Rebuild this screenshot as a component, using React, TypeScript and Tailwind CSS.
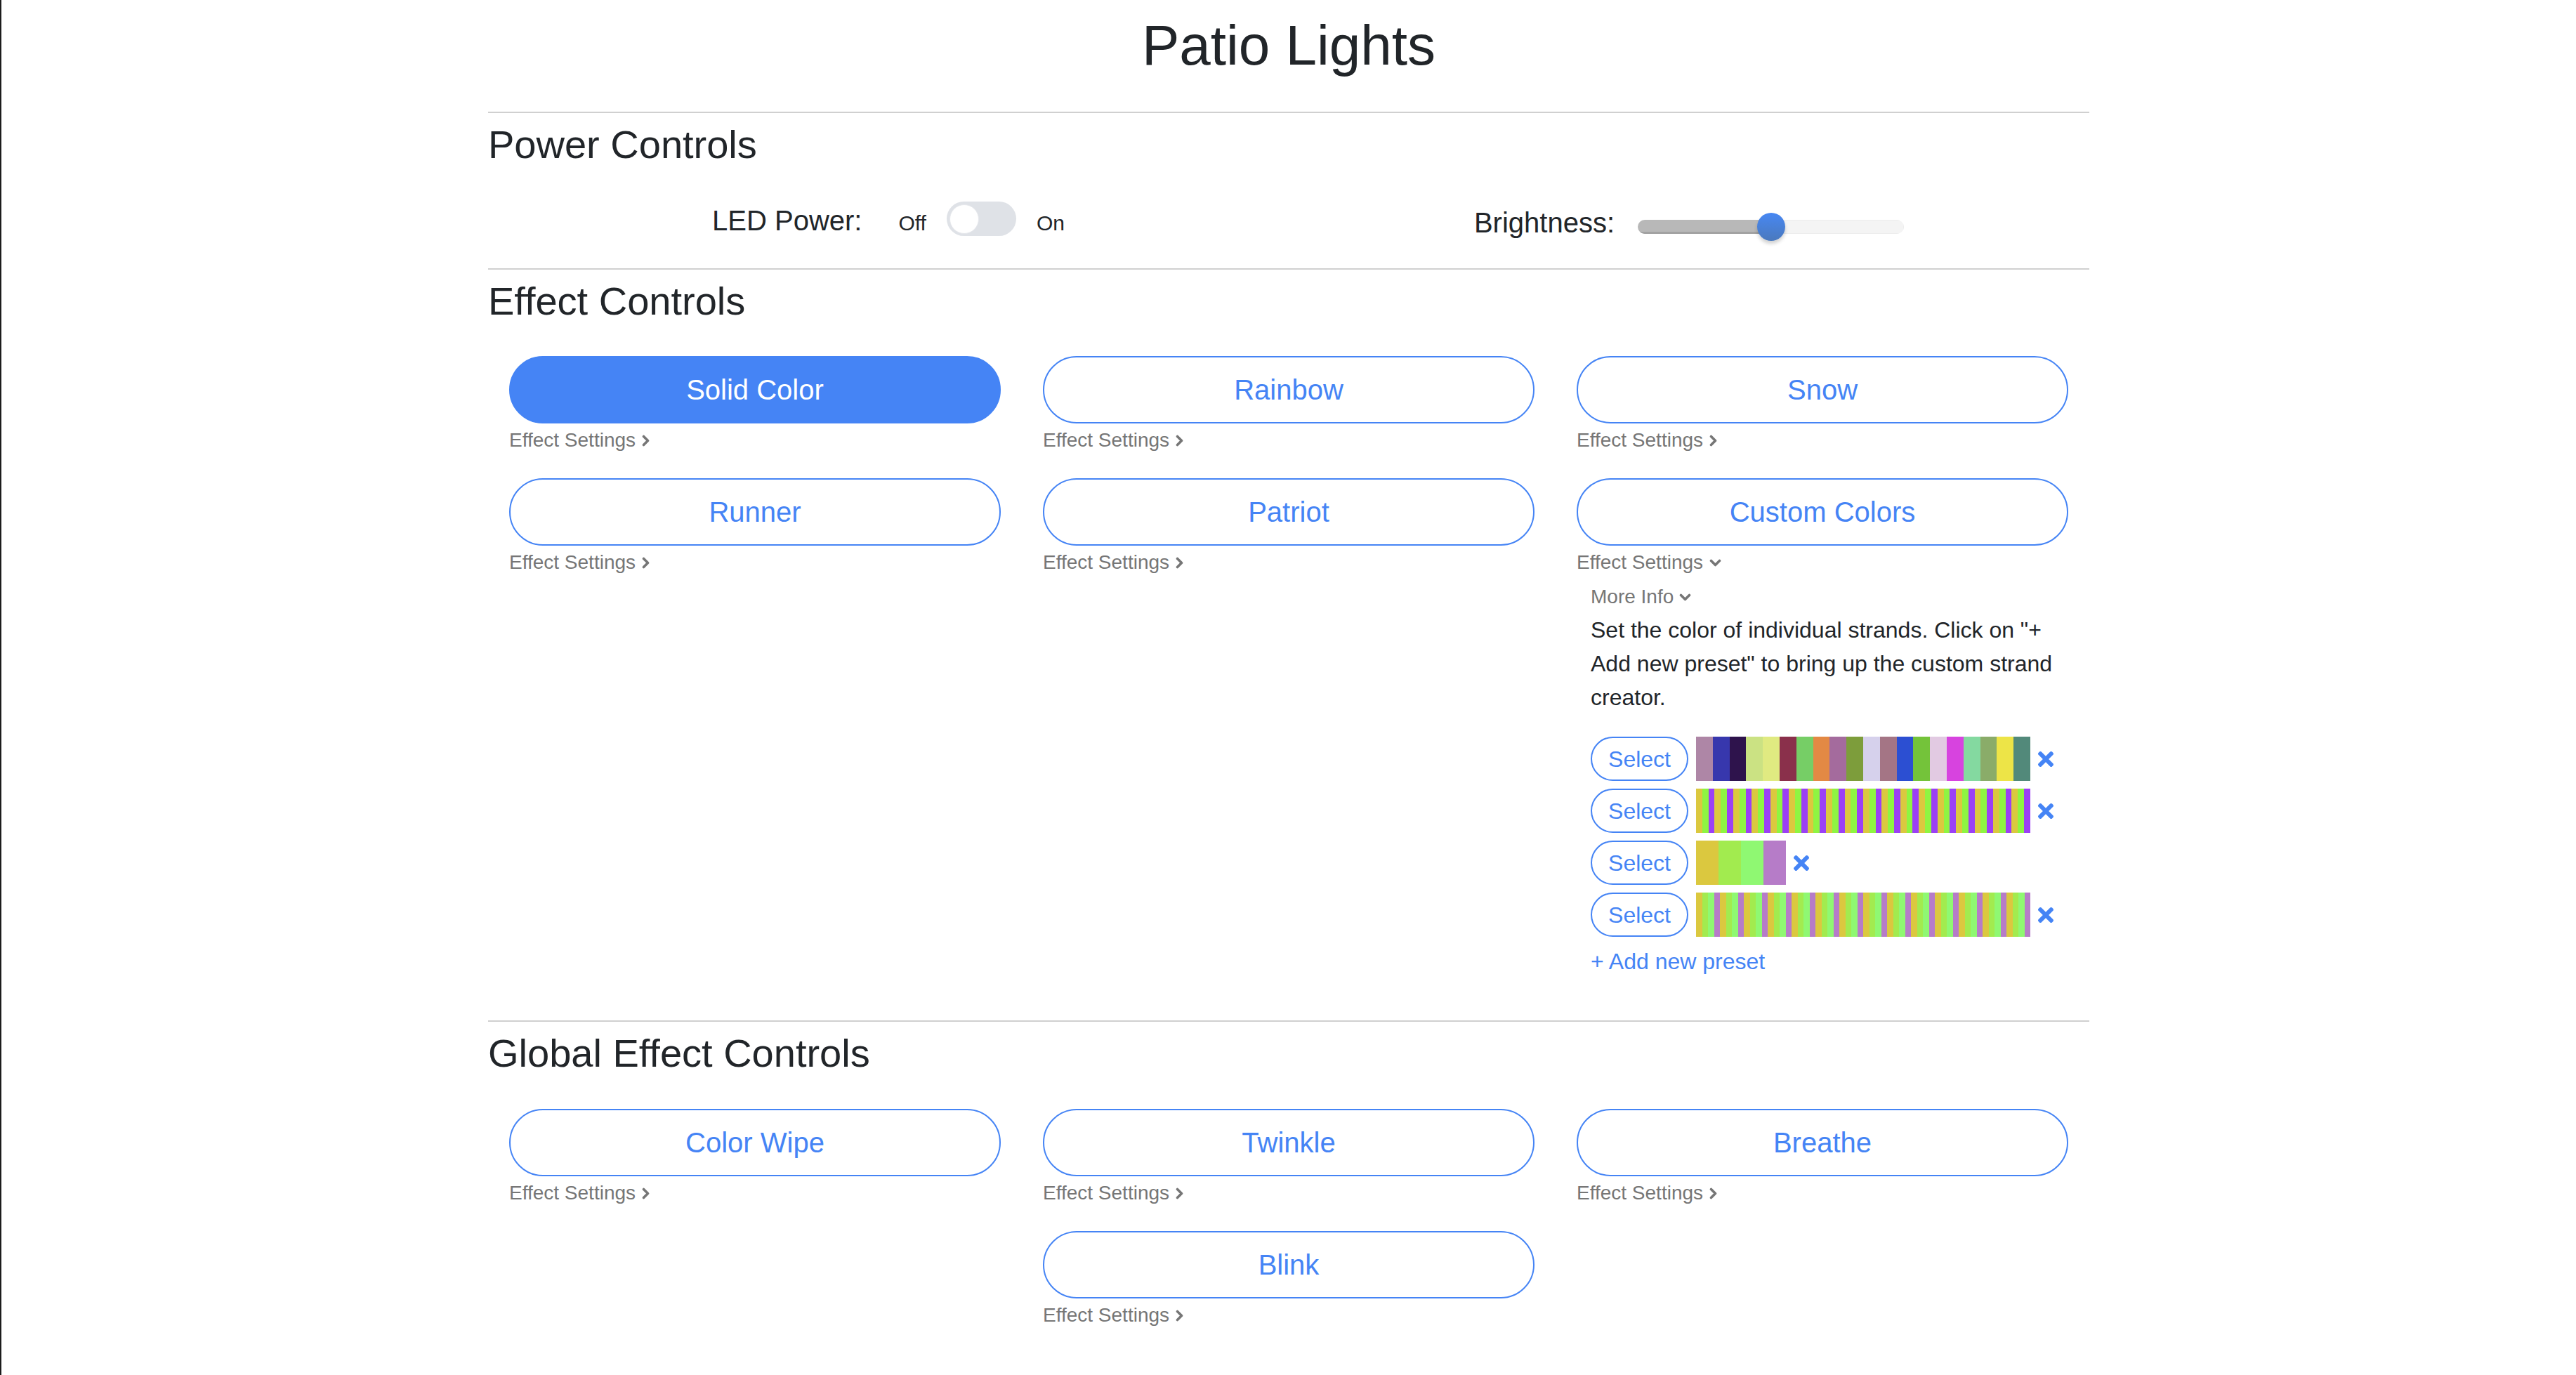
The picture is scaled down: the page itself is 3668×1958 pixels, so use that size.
import React from "react";
import { FaTimes } from "react-icons/fa";

const row1 = [
  "#ae86a6", "#3737ad", "#2e134c", "#cbe283", "#e0ea81", "#8a304b", "#76ce66",
  "#e38944", "#a46b9d", "#7d9d3b", "#d6d1ec", "#a47585", "#2c4fd2", "#74c33a",
  "#e2cae2", "#d743df", "#84d9a0", "#8aac69", "#ede447", "#52897a",
];
const tri = ["#dbc83f", "#8ef542", "#9b40f5"];
const quad = ["#dbc83f", "#a2eb4f", "#8ff872", "#b67cc8"];
const row2 = Array.from({ length: 54 }, (_, i) => tri[i % 3]);
const row3 = quad;
const row4 = Array.from({ length: 56 }, (_, i) => quad[i % 4]);
const presets = [row1, row2, row3, row4];

function ChevronRight({ className }: { className?: string }) {
  return (
    <svg viewBox="0 0 11 17" width={11} height={17} className={className}>
      <polyline points="2.5,2.5 8.5,8.5 2.5,14.5" fill="none" stroke="currentColor" strokeWidth={3.6} strokeLinecap="round" strokeLinejoin="round" />
    </svg>
  );
}

function ChevronDown({ className }: { className?: string }) {
  return (
    <svg viewBox="0 0 17 11" width={17} height={11} className={className}>
      <polyline points="2.5,2.5 8.5,8.5 14.5,2.5" fill="none" stroke="currentColor" strokeWidth={3.6} strokeLinecap="round" strokeLinejoin="round" />
    </svg>
  );
}

function EffectSettings({ open }: { open?: boolean }) {
  return (
    <div className="mt-[3px] flex items-center text-[28px] leading-[42px] text-[#767676]">
      <span>Effect Settings</span>
      {open ? <ChevronDown className="ml-[9px] mt-[1px]" /> : <ChevronRight className="ml-[9px]" />}
    </div>
  );
}

function EffectCell({
  label,
  active,
  children,
  open,
}: {
  label: string;
  active?: boolean;
  open?: boolean;
  children?: React.ReactNode;
}) {
  return (
    <div className="w-[760px] px-[30px] pb-[33px]">
      <button
        className={
          active
            ? "w-full h-[96px] rounded-full border-2 border-[#4584f5] bg-[#4584f5] text-white text-[40px] leading-[60px]"
            : "w-full h-[96px] rounded-full border-2 border-[#4584f5] bg-white text-[#4584f5] text-[40px] leading-[60px]"
        }
      >
        {label}
      </button>
      <EffectSettings open={open} />
      {children}
    </div>
  );
}

function PresetRow({ colors }: { colors: string[] }) {
  const w = Math.min(32, 476 / colors.length);
  return (
    <div className="flex items-center">
      <button className="w-[139px] h-[63px] rounded-full border-2 border-[#4584f5] bg-white text-[#4584f5] text-[32px] leading-none flex items-center justify-center">
        Select
      </button>
      <div className="ml-[11px] h-[63px] flex">
        {colors.map((c, i) => (
          <div key={i} style={{ width: w, background: c }} className="h-full" />
        ))}
      </div>
      <FaTimes size={32} className="ml-[6px] text-[#4584f5]" />
    </div>
  );
}

function CustomDetails() {
  return (
    <div className="pl-[20px]">
      <div className="mt-[7px] flex items-center text-[28px] leading-[42px] text-[#767676]">
        <span>More Info</span>
        <ChevronDown className="ml-[8px] mt-[1px]" />
      </div>
      <p className="mt-[2px] text-[32px] leading-[48px] text-[#212529]">
        Set the color of individual strands. Click on "+ Add new preset" to bring up the custom strand creator.
      </p>
      <div className="mt-[32px] flex flex-col gap-[11px]">
        {presets.map((p, i) => (
          <PresetRow key={i} colors={p} />
        ))}
      </div>
      <div className="mt-[11px] text-[32px] leading-[48px] text-[#4584f5]">+ Add new preset</div>
    </div>
  );
}

export default function App() {
  return (
    <div className="min-h-screen bg-white border-l-2 border-[#1c1c1c] font-['Liberation_Sans',Arial,sans-serif] text-[#212529]">
      <div className="w-[2280px] mx-auto pb-[40px]">
        <h1 className="pt-[17px] text-center text-[80px] leading-[96px] font-normal">Patio Lights</h1>
        <hr className="mt-[46px] border-0 border-t-2 border-[#d0d0d0]" />

        <h3 className="mt-[11px] text-[56px] leading-[67px] font-normal">Power Controls</h3>
        <div className="mt-[45px] flex h-[60px]">
          <div className="w-1/2 flex justify-center items-start">
            <span className="text-[40px] leading-[60px]">LED Power:</span>
            <span className="ml-[52px] mt-[4px] text-[30px] leading-[60px]">Off</span>
            <div className="ml-[29px] mt-[3px] w-[99px] h-[49px] rounded-full bg-[#dfe2e7] flex items-center pl-[4px]">
              <div className="w-[42px] h-[42px] rounded-full bg-white border border-[#e6e8ec]" />
            </div>
            <span className="ml-[29px] mt-[4px] text-[30px] leading-[60px]">On</span>
          </div>
          <div className="w-1/2 flex justify-center items-start">
            <span className="mt-[3px] text-[40px] leading-[60px]">Brightness:</span>
            <div className="ml-[33px] mt-[19px] relative w-[379px] h-[40px] flex items-center">
              <div className="w-full h-[20px] rounded-full flex overflow-hidden">
                <div className="w-[190px] h-full bg-[#b8b8b8] border-b-[3px] border-[#a2a2a2]" />
                <div className="flex-1 h-full bg-[#f4f4f4] border border-[#ededed]" />
              </div>
              <div className="absolute left-[170px] top-0 w-[40px] h-[40px] rounded-full bg-linear-to-b from-[#4787f3] to-[#4a79bd] shadow-[0_4px_5px_rgba(0,0,0,0.18)]" />
            </div>
          </div>
        </div>
        <hr className="mt-[38px] border-0 border-t-2 border-[#d0d0d0]" />

        <h3 className="mt-[11px] text-[56px] leading-[67px] font-normal">Effect Controls</h3>
        <div className="mt-[45px] flex flex-wrap justify-center items-start">
          <EffectCell label="Solid Color" active />
          <EffectCell label="Rainbow" />
          <EffectCell label="Snow" />
          <EffectCell label="Runner" />
          <EffectCell label="Patriot" />
          <EffectCell label="Custom Colors" open>
            <CustomDetails />
          </EffectCell>
        </div>
        <hr className="mt-[27px] border-0 border-t-2 border-[#d0d0d0]" />

        <h3 className="mt-[11px] text-[56px] leading-[67px] font-normal">Global Effect Controls</h3>
        <div className="mt-[46px] flex flex-wrap justify-center items-start">
          <EffectCell label="Color Wipe" />
          <EffectCell label="Twinkle" />
          <EffectCell label="Breathe" />
          <EffectCell label="Blink" />
        </div>
      </div>
    </div>
  );
}
